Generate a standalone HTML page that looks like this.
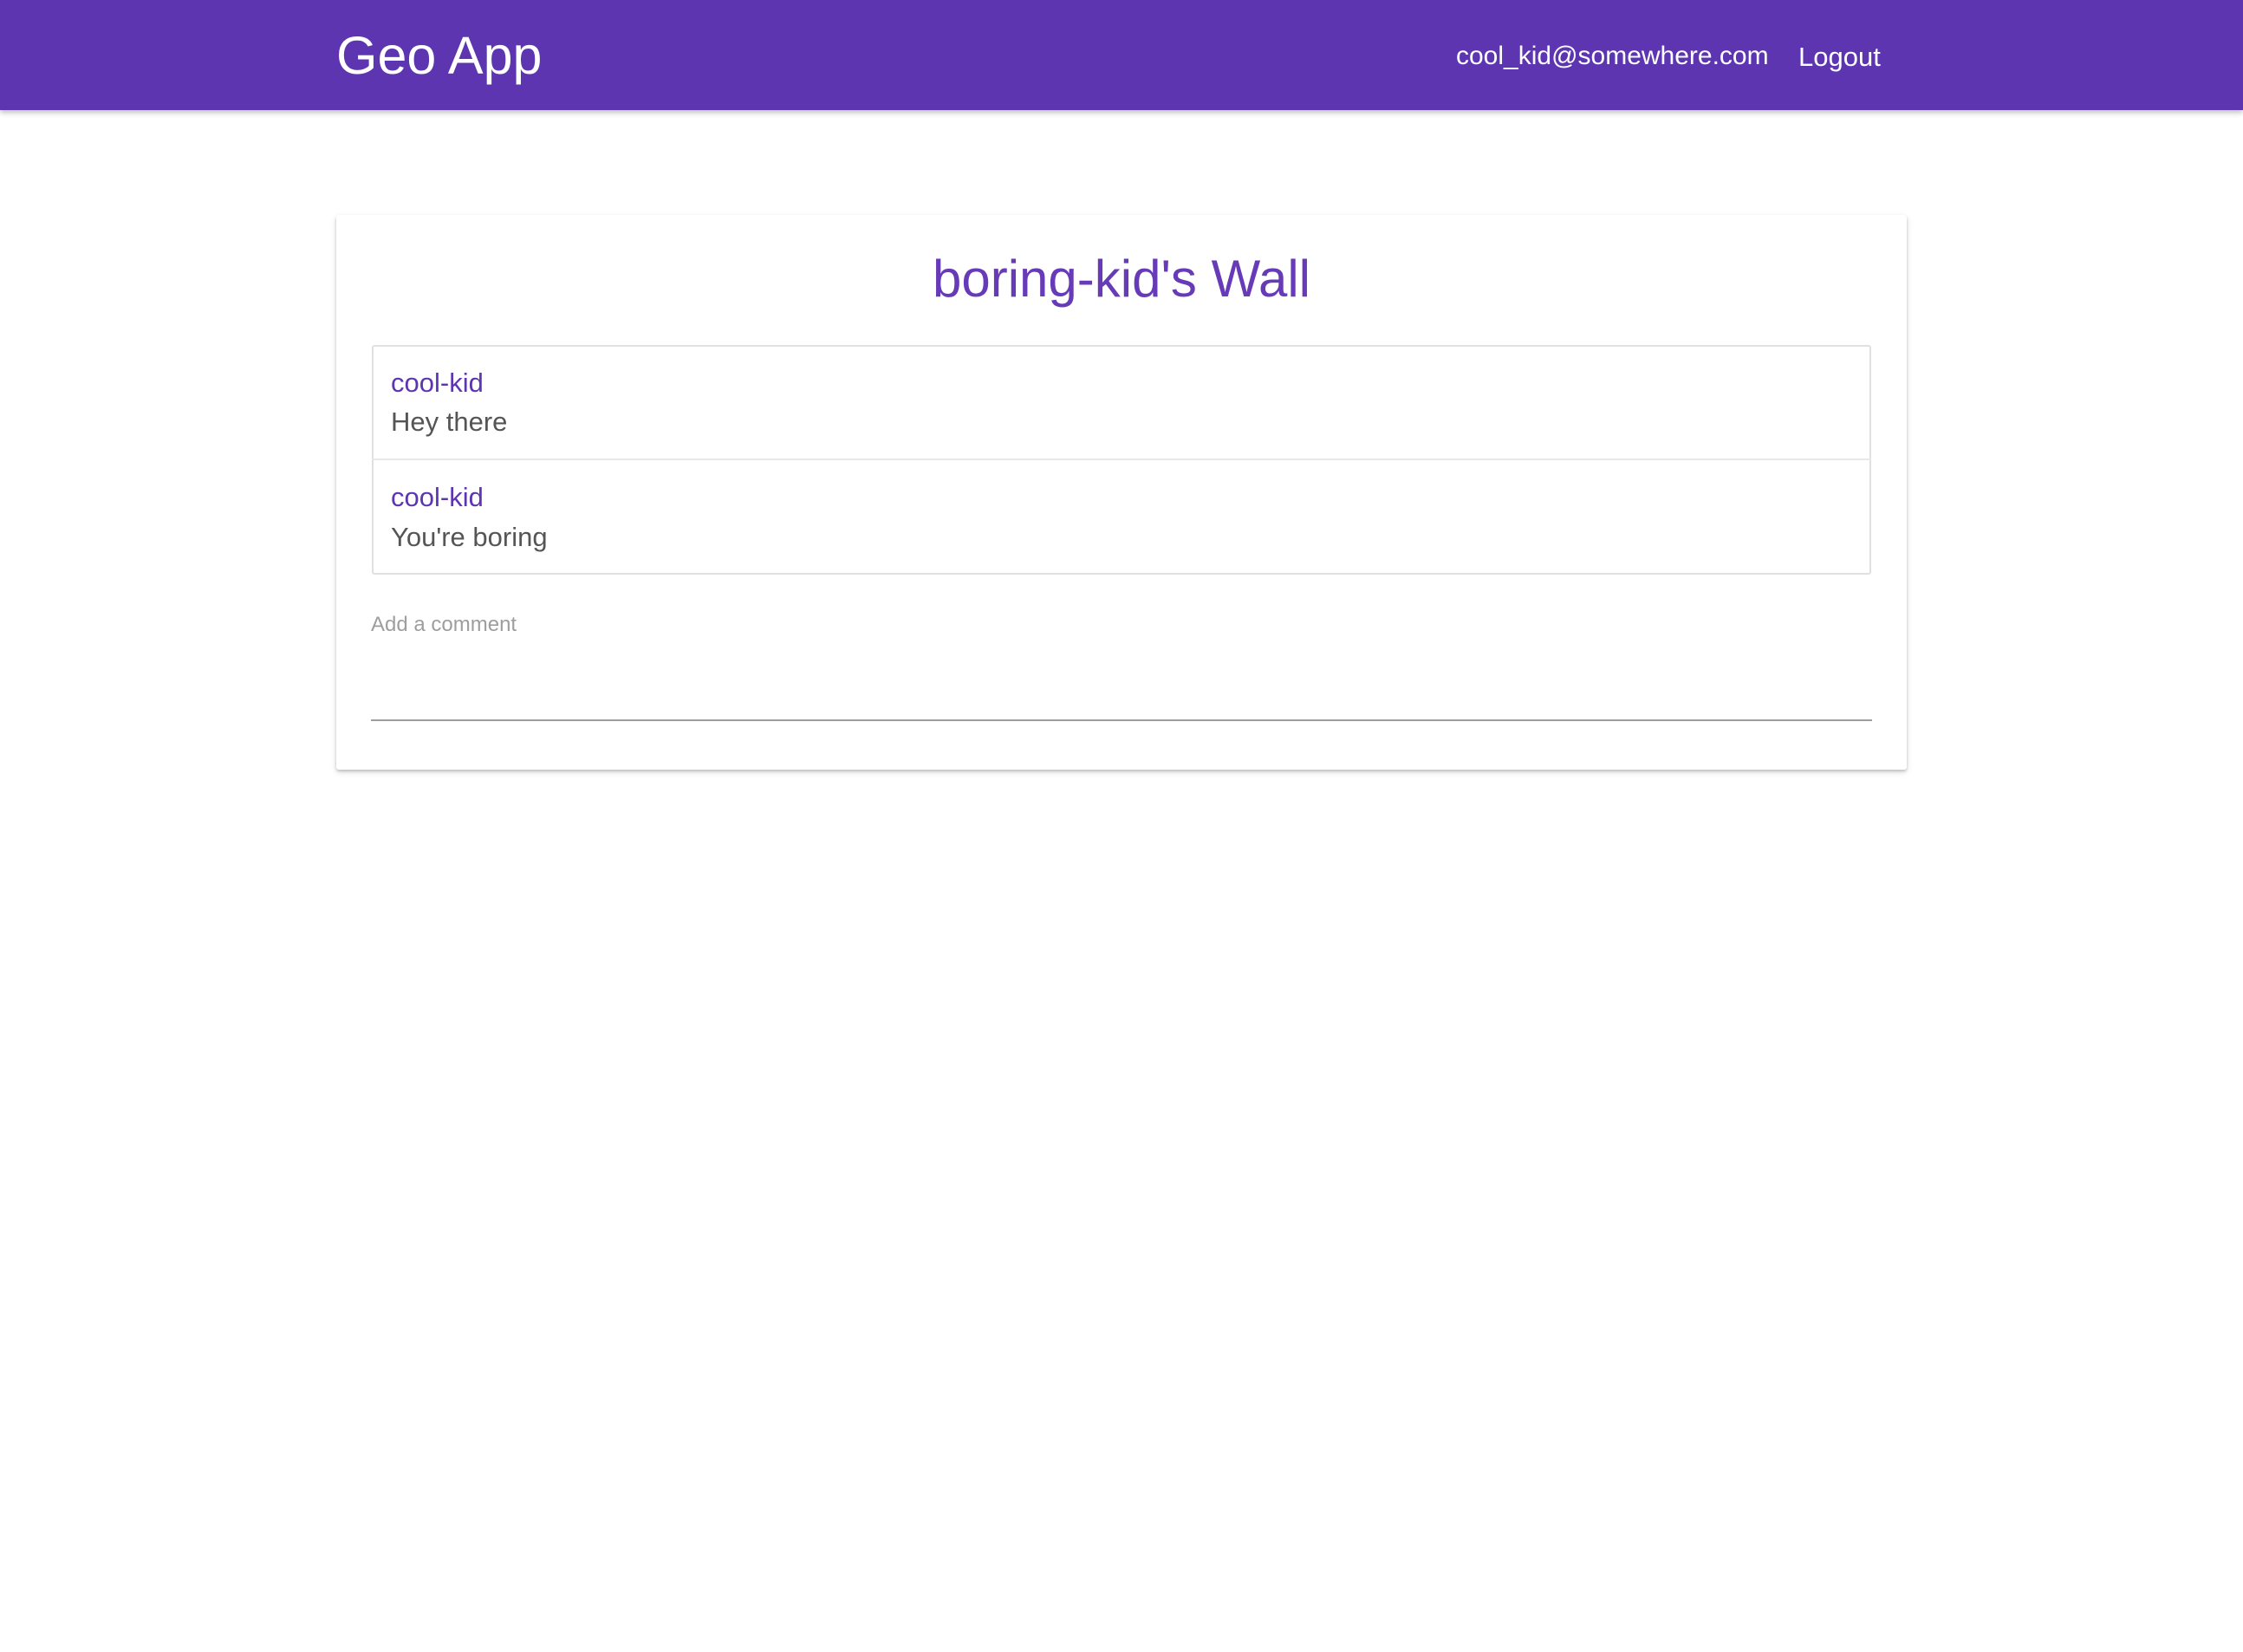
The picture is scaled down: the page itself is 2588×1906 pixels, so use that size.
<!DOCTYPE html>
<html><head><meta charset="utf-8"><style>
*{margin:0;padding:0;box-sizing:border-box}
body{width:2588px;height:1906px;background:#fff;font-family:"Liberation Sans",Arial,sans-serif;position:relative;overflow:hidden}
.nav{position:absolute;left:0;top:0;width:2588px;height:127px;background:#5e35b1;box-shadow:0 3px 6px rgba(0,0,0,.25)}
.t{position:absolute;white-space:nowrap;line-height:1}
.card{position:absolute;left:388px;top:248px;width:1812px;height:640px;background:#fff;border-radius:3px;box-shadow:0 2px 3px rgba(0,0,0,.18),0 3px 8px rgba(0,0,0,.12)}
.list{position:absolute;left:429px;top:398px;width:1730px;height:265px;border:2px solid #e0e0e0;border-radius:3px}
.div{position:absolute;left:429px;top:529px;width:1730px;height:2px;background:#e8e8e8}
.u{color:#5e35b1;font-size:31px}
.m{color:#555;font-size:31px}
</style></head><body>
<div class="nav"></div>
<div class="t" style="left:388px;top:34px;font-size:61px;color:#fff">Geo App</div>
<div class="t" style="left:1680px;top:50px;font-size:30px;color:#fff">cool_kid@somewhere.com</div>
<div class="t" style="left:2075px;top:50px;font-size:31px;color:#fff">Logout</div>
<div class="card"></div>
<div class="t" style="left:388px;width:1812px;text-align:center;top:292px;font-size:60px;color:#673ab7">boring-kid's Wall</div>
<div class="list"></div>
<div class="div"></div>
<div class="t u" style="left:451px;top:426px">cool-kid</div>
<div class="t m" style="left:451px;top:471px">Hey there</div>
<div class="t u" style="left:451px;top:558px">cool-kid</div>
<div class="t m" style="left:451px;top:604px">You're boring</div>
<div class="t" style="left:428px;top:709px;font-size:24px;color:#9e9e9e">Add a comment</div>
<div style="position:absolute;left:428px;top:830px;width:1732px;height:2px;background:#9e9e9e"></div>
</body></html>
